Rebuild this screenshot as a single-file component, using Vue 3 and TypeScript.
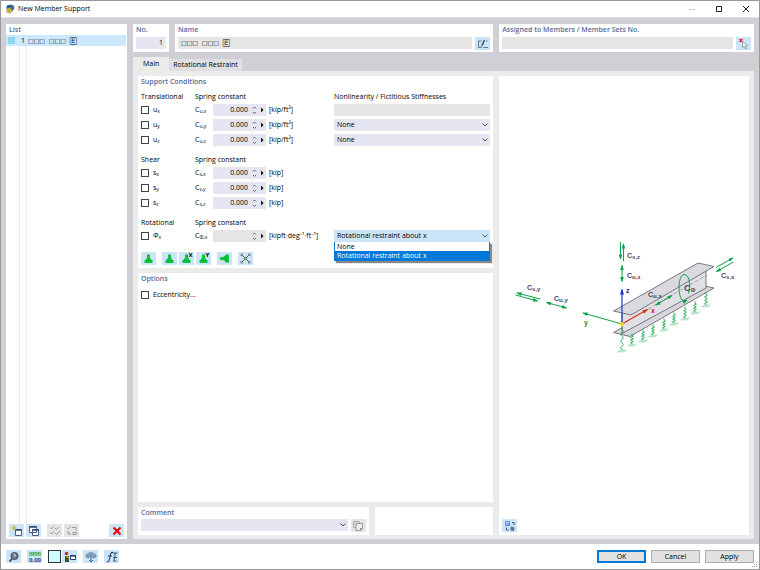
<script setup lang="ts">
import { ref } from 'vue'

interface Row {
  id: string
  symbol: string
  axis: string
  coefSub: string
  value: string
  unit: string
  disabled?: boolean
}
interface Group {
  title: string
  rows: Row[]
}

const groups: Group[] = [
  {
    title: 'Translational',
    rows: ['x', 'y', 'z'].map((a) => ({ id: 'u' + a, symbol: 'u', axis: a, coefSub: 'u,' + a, value: '0.000', unit: '[kip/ft²]' })),
  },
  {
    title: 'Shear',
    rows: ['x', 'y', 'z'].map((a) => ({ id: 's' + a, symbol: 's', axis: a, coefSub: 's,' + a, value: '0.000', unit: '[kip]' })),
  },
  {
    title: 'Rotational',
    rows: [{ id: 'phi', symbol: 'Φ', axis: 'x', coefSub: 'Φ,x', value: '', unit: '[kipft·deg⁻¹·ft⁻¹]', disabled: true }],
  },
]

const supportName = ref('□□□\u00a0\u00a0□□□\u00a0\u00a0🄴')
const memberNo = ref('1')
const restraint = ref('about-x')
const springs = [
  [622, 325, 348], [632, 331, 342], [643, 327, 338], [653, 322, 333], [664, 316, 327],
  [674, 310, 321], [685, 304, 316], [695, 299, 310], [706, 290, 303],
]
function springPath(x: number, top: number, bottom: number): string {
  const step = (bottom - top - 3) / 6
  let d = `M${x} ${top}v2`
  for (let i = 0; i < 6; i++) d += `L${x + (i % 2 ? -1.4 : 1.4)} ${top + 2 + step * (i + 0.5)}`
  return d + `L${x} ${bottom - 1}V${bottom}`
}
const presets = [
  { label: 'Hinged support', axis: '', gap: false },
  { label: 'Fixed support', axis: '', gap: true },
  { label: 'Support in X', axis: 'X', gap: false },
  { label: 'Support in Y', axis: 'Y', gap: false },
]
</script>

<template>
  <div class="window">
    <header class="titlebar">
      <svg class="app-icon" viewBox="0 0 10 10" aria-hidden="true">
        <path d="M1 4.500L2 1.500 5 .5l3.500 .8L9.500 4 7.500 7.500 4 5z" fill="#3c6fa5" />
        <path d="M2 2l3 1 1.500-1.500" stroke="#173f66" stroke-width=".8" fill="none" />
        <circle cx="4.200" cy="6.600" r="2.500" fill="#e8c63a" stroke="#a07a13" stroke-width=".6" />
        <circle cx="4.200" cy="6.600" r=".8" fill="#8a6a14" />
      </svg>
      <h1>New Member Support</h1>
      <div class="window-controls">
        <button type="button" aria-label="Minimize" disabled><svg viewBox="0 0 8 8"><path d="M1 4.500h6" stroke="#ccc" /></svg></button>
        <button type="button" aria-label="Maximize"><svg viewBox="0 0 8 8"><path d="M1.500 1.500h5v5h-5z" fill="none" stroke="#222" /></svg></button>
        <button type="button" aria-label="Close"><svg viewBox="0 0 8 8"><path d="M1 1l6 6M7 1L1 7" stroke="#222" /></svg></button>
      </div>
    </header>

    <main class="body">
      <section class="card list">
        <h2>List</h2>
        <div class="list-rows">
          <button type="button" class="list-row">
            <span class="swatch"></span><span class="num">1</span><span class="boxes">{{ supportName }}</span>
          </button>
          <div class="list-grid"></div>
        </div>
        <div class="list-tools">
          <button type="button" class="tool" aria-label="New">
            <svg viewBox="0 0 12 12"><path d="M4.500 4.500h6v6h-6z" fill="#fff" stroke="#4a5f80" /><path d="M4.500 5h6" stroke="#26456e" stroke-width="1.500" /><path d="M3 .5v5M.5 3h5M1.300 1.300l3.400 3.400M4.700 1.300L1.300 4.700" stroke="#c3b01a" stroke-width=".8" /></svg>
          </button>
          <button type="button" class="tool" aria-label="Copy">
            <svg viewBox="0 0 12 12"><path d="M1.500 1.500h7v6h-7zM4.500 4.500h6v6h-6z" fill="#fff" stroke="#4a5f80" /><path d="M1.500 2h7M4.500 5h6" stroke="#26456e" stroke-width="1.500" /></svg>
          </button>
          <button type="button" class="tool off push" aria-label="Select all" disabled>
            <svg viewBox="0 0 12 12" fill="none" stroke="#999"><path d="M1 2.500l1.500 1.500L5 1M1 7.500L2.500 9 5 6M6 3l1.500 1.500L10 2M6 8l1.500 1.500L11 6" /></svg>
          </button>
          <button type="button" class="tool off" aria-label="Invert selection" disabled>
            <svg viewBox="0 0 12 12" fill="none" stroke="#999"><path d="M1 2.500l1.500 1.500L5 1M6 2.500h4v3M2 6v3h3M7 7.500h3.500v2H7z" /></svg>
          </button>
          <button type="button" class="tool end" aria-label="Delete">
            <svg viewBox="0 0 12 12"><path d="M2.500 2.500l7 7M9.500 2.500l-7 7" stroke="#f00000" stroke-width="2" /></svg>
          </button>
        </div>
      </section>

      <div class="editor">
        <div class="top">
          <section class="card no">
            <h2><label for="no">No.</label></h2>
            <input id="no" v-model="memberNo" class="field right" />
          </section>
          <section class="card name">
            <h2><label for="name">Name</label></h2>
            <div class="line">
              <input id="name" v-model="supportName" class="field gray boxes" readonly />
              <button type="button" class="tool" aria-label="Edit name">
                <svg viewBox="0 0 12 12" fill="none" stroke="#4b6070"><path d="M4.500 3H1.500v6.500H4M6.500 9.500H11M9 3h1.500" stroke-width=".8" /><path d="M5 7.500L7.500 2" stroke-width="1.800" /><path d="M4.500 9.500L5 7.500" stroke-width="1" /></svg>
              </button>
            </div>
          </section>
          <section class="card assigned">
            <h2><label for="assigned">Assigned to Members / Member Sets No.</label></h2>
            <div class="line">
              <input id="assigned" class="field gray" readonly />
              <button type="button" class="tool" aria-label="Select members">
                <svg viewBox="0 0 12 12"><path d="M1.500 1l3 3M4.500 1l-3 3" stroke="#e02030" stroke-width="1.200" /><path d="M4.500 3.500v6l1.500-1.400L7.500 11l1.300-.6L7.500 7.700h2z" fill="#fff" stroke="#75818d" stroke-width=".7" /></svg>
              </button>
            </div>
          </section>
        </div>

        <nav class="tabs" role="tablist">
          <button type="button" role="tab" class="tab active" aria-selected="true">Main</button>
          <button type="button" role="tab" class="tab" aria-selected="false">Rotational Restraint</button>
        </nav>

        <div class="panel">
          <div class="left">
            <section class="card conditions">
              <h2>Support Conditions</h2>
              <div v-for="(g, gi) in groups" :key="g.title" class="group">
                <div class="grid heads">
                  <h3>{{ g.title }}</h3>
                  <h3>Spring constant</h3>
                  <h3 v-if="gi === 0" class="wide">Nonlinearity / Fictitious Stiffnesses</h3>
                </div>
                <div v-for="(r, ri) in g.rows" :key="r.id" class="grid">
                  <label class="check"><input type="checkbox" /><span>{{ r.symbol }}<sub>{{ r.axis }}</sub></span></label>
                  <label :for="'c-' + r.id" class="coef">C<sub>{{ r.coefSub }}</sub></label>
                  <div class="spin" :class="{ gray: r.disabled }">
                    <input :id="'c-' + r.id" :value="r.value" :disabled="r.disabled" />
                    <svg viewBox="0 0 16 12" aria-hidden="true">
                      <path d="M3 4.500L4.500 3 6 4.500M3 8L4.500 9.500 6 8" fill="none" stroke="#555" stroke-width=".9" />
                      <path d="M11 3.500v5L13.500 6z" fill="#111" />
                    </svg>
                  </div>
                  <span class="unit">{{ r.unit }}</span>
                  <input v-if="gi === 0 && ri === 0" class="field gray" aria-label="Nonlinearity x" disabled />
                  <div v-else-if="gi === 0" class="select">
                    <select :aria-label="'Nonlinearity ' + r.axis"><option>None</option></select>
                    <svg viewBox="0 0 8 8" aria-hidden="true"><path d="M1.500 2.500L4 5l2.500-2.500" /></svg>
                  </div>
                  <div v-else-if="gi === 2" class="select open">
                    <select v-model="restraint" aria-label="Rotational nonlinearity">
                      <option value="none">None</option>
                      <option value="about-x">Rotational restraint about x</option>
                    </select>
                    <svg viewBox="0 0 8 8" aria-hidden="true"><path d="M1.500 2.500L4 5l2.500-2.500" /></svg>
                    <ul class="menu" role="listbox">
                      <li role="option" @click="restraint = 'none'">None</li>
                      <li role="option" class="chosen" aria-selected="true" @click="restraint = 'about-x'">Rotational restraint about x</li>
                    </ul>
                  </div>
                </div>
              </div>
              <div class="presets">
                <button v-for="p in presets" :key="p.label" type="button" class="tool" :class="{ push: p.gap }" :aria-label="p.label">
                  <svg viewBox="0 0 15 13">
                    <path d="M6 2.500h3v3l1.500 2.500h1v3h-8V8h1L6 5.500z" fill="#08c440" />
                    <path d="M4 8.500h7" stroke="#0aa038" stroke-width=".6" />
                    <text v-if="p.axis" x="9.500" y="5" font-size="6" font-weight="700">{{ p.axis }}</text>
                  </svg>
                </button>
                <button type="button" class="tool push" aria-label="Lateral support">
                  <svg viewBox="0 0 15 13"><path d="M3 5h3l2.500-1.500V2.500H12v8H8.500v-1L6 8H3z" fill="#08c440" /><path d="M9 3v7" stroke="#0aa038" stroke-width=".6" /></svg>
                </button>
                <button type="button" class="tool push" aria-label="Free">
                  <svg viewBox="0 0 15 13" fill="none" stroke="#555"><path d="M4 3l7 7M11 3l-7 7" /><path d="M3 4V2h2M10 2h2v2M3 9v2h2M10 11h2V9" stroke-width=".7" /><circle cx="7.500" cy="6.500" r="1.200" fill="#58a050" stroke="none" /></svg>
                </button>
              </div>
            </section>
            <section class="card options">
              <h2>Options</h2>
              <label class="check"><input type="checkbox" /><span>Eccentricity...</span></label>
            </section>
            <div class="bottom">
              <section class="card comment">
                <h2><label for="comment">Comment</label></h2>
                <div class="line">
                  <div class="select">
                    <select id="comment"></select>
                    <svg viewBox="0 0 8 8" aria-hidden="true"><path d="M1.500 2.500L4 5l2.500-2.500" /></svg>
                  </div>
                  <button type="button" class="tool off" aria-label="Comment library" disabled>
                    <svg viewBox="0 0 12 12"><path d="M1.500 1.500h6v6h-6z" fill="#ddd" stroke="#aaa" /><path d="M4 3.500h6.500v5L8.500 10.500H4z" fill="#eee" stroke="#999" /><path d="M8 11V8h3z" fill="#999" /></svg>
                  </button>
                </div>
              </section>
              <section class="card spare"></section>
            </div>
          </div>

          <section class="card preview">
            <svg class="diagram" viewBox="504 235 240 120" role="img" aria-label="Member support diagram">
              <defs>
                <marker id="g" viewBox="0 0 6 4" refX="5" refY="2" markerWidth="5.500" markerHeight="4" markerUnits="userSpaceOnUse" orient="auto-start-reverse"><path d="M0 0l6 2-6 2z" fill="#0aa348" /></marker>
                <marker id="b" viewBox="0 0 6 4" refX="5" refY="2" markerWidth="6" markerHeight="4.500" markerUnits="userSpaceOnUse" orient="auto"><path d="M0 0l6 2-6 2z" fill="#1437d0" /></marker>
                <marker id="r" viewBox="0 0 6 4" refX="5" refY="2" markerWidth="6" markerHeight="4.500" markerUnits="userSpaceOnUse" orient="auto"><path d="M0 0l6 2-6 2z" fill="#d63a10" /></marker>
              </defs>
              <g stroke="#5b5b66" stroke-width=".8" stroke-linejoin="round">
                <path d="M613.500 330L698 282l16 3.500L630 334z" fill="#d6d6dc" />
                <path d="M622 310L706 266v19.500L622 331z" fill="#e0e0e5" />
                <path d="M613.500 308.500L698 260.500l16 3.500-83 48.500z" fill="#d9d9df" />
              </g>
              <path d="M622 321.500L706 273" stroke="#777" stroke-width=".6" stroke-dasharray="4 2" />
              <g fill="none" stroke="#18a850" stroke-width=".9">
                <path v-for="s in springs" :key="s[0]" :d="springPath(s[0], s[1], s[2])" />
              </g>
              <g fill="#c4ead0" stroke="#7fcb98" stroke-width=".4">
                <path v-for="s in springs" :key="s[0]" :d="`M${s[0] - 4.5} ${s[2] + 1.5}l3-2h6l-2.5 2z`" />
              </g>
              <g fill="none" stroke="#0aa348" stroke-width="1">
                <path d="M620.500 239.500v17" marker-end="url(#g)" />
                <path d="M623.500 258.500v-17" marker-end="url(#g)" />
                <path d="M622 263v16" marker-start="url(#g)" marker-end="url(#g)" />
                <path d="M540.500 296.500l-23.500-6" marker-end="url(#g)" />
                <path d="M515.500 292.500l22 6" marker-end="url(#g)" />
                <path d="M546.500 300l20 5.500" marker-start="url(#g)" marker-end="url(#g)" />
                <path d="M622 321.500l-39-11" marker-end="url(#g)" />
                <path d="M656 302.500l16-9.500" marker-start="url(#g)" marker-end="url(#g)" />
                <path d="M716 265l17-9.500" marker-end="url(#g)" />
                <path d="M733.500 259.500l-17 9.500" marker-end="url(#g)" />
                <path d="M689 277c-1-3-3-5-5-5-3 0-5 6-5 13.500s2.500 13 5 13q1.500 0 3-1" marker-end="url(#g)" />
                <path d="M689 277q1.500 7-.5 14" />
              </g>
              <path d="M622 321V287" stroke="#1437d0" stroke-width="1.200" marker-end="url(#b)" />
              <path d="M622 321.500l25.500-14.500" stroke="#d63a10" stroke-width="1.200" marker-end="url(#r)" />
              <circle cx="622" cy="321.500" r="2" fill="#ffd21a" />
              <g class="labels">
                <text x="627" y="255">C<tspan class="s" dy="1.500">s,z</tspan></text>
                <text x="627" y="275">C<tspan class="s" dy="1.500">u,z</tspan></text>
                <text x="527" y="287">C<tspan class="s" dy="1.500">s,y</tspan></text>
                <text x="554" y="298">C<tspan class="s" dy="1.500">u,y</tspan></text>
                <text x="648" y="294">C<tspan class="s" dy="1.500">u,x</tspan></text>
                <text x="721" y="275">C<tspan class="s" dy="1.500">s,x</tspan></text>
                <text x="684" y="288" class="big">C<tspan class="s" dy="1.500">Φ</tspan></text>
                <text x="626" y="290" fill="#1c1c8c">z</text>
                <text x="651" y="310" fill="#e02020">x</text>
                <text x="584" y="322" fill="#0a9040">y</text>
              </g>
            </svg>
            <div>
              <button type="button" class="tool" aria-label="Switch view">
                <svg viewBox="0 0 12 12"><path d="M1 1h5v5H1z" fill="#5b8fe8" /><path d="M2 2.500h3M2 4h2" stroke="#fff" stroke-width=".7" /><path d="M2.500 7.500V10h2M8 2.500h2V5" fill="none" stroke="#445" stroke-width=".9" /><path d="M6.500 6.500l4 1-.5 3.500-3.500-.5z" fill="#5a6e98" /></svg>
              </button>
            </div>
          </section>
        </div>
      </div>
    </main>

    <footer class="footer">
      <button type="button" class="tool" aria-label="Help">
        <svg viewBox="0 0 12 12"><circle cx="6.500" cy="5" r="3.600" fill="#667784" stroke="#43525e" /><path d="M4 8L1.500 10.500" stroke="#43525e" stroke-width="1.800" /><path d="M5.300 4q1.200-1.400 2.400 0L6.500 5.500v.8" stroke="#fff" stroke-width=".8" fill="none" /></svg>
      </button>
      <button type="button" class="tool" aria-label="Units">
        <svg viewBox="0 0 12 12"><path d="M0 1h12v4H0z" fill="#7cc68a" /><path d="M2 1v2M4.500 1v2M7 1v2M9.500 1v2" stroke="#4a9a5a" stroke-width=".7" /><text x="0" y="11" font-size="6" font-weight="700" fill="#24507c">0,00</text></svg>
      </button>
      <button type="button" class="color" aria-label="Color"></button>
      <button type="button" class="tool joined" aria-label="Display">
        <svg viewBox="0 0 12 12"><circle cx="2.500" cy="2.500" r="1.800" fill="#b33" /><path d="M1 5h4v6H1z" fill="#3a5a2a" /><path d="M2 5l3 2" stroke="#dc3" /><path d="M6.500 4.500h5v4h-5z" fill="#fff" stroke="#26456e" /><path d="M6 5h6" stroke="#26456e" stroke-width="1.400" /></svg>
      </button>
      <button type="button" class="tool" aria-label="View">
        <svg viewBox="0 0 12 12"><path d="M1 4q5-5 10 0v2L8 7V5H4v2L1 6z" fill="#7fa3c2" stroke="#4a7296" stroke-width=".6" /><path d="M6 5v6M4 9l2 2 2-2" stroke="#3d6385" fill="none" /></svg>
      </button>
      <button type="button" class="tool" aria-label="Formula">
        <svg viewBox="0 0 12 12"><path d="M1 11q2 0 2.500-3L4.500 3.500Q5 1 7 1.500M2 5h4" fill="none" stroke="#26456e" stroke-width="1.100" /><path d="M6.500 2h5M9 2v4M7 6.500h4M9 6.500L7.500 10h3" stroke="#26456e" stroke-width=".9" fill="none" /></svg>
      </button>
      <div class="actions">
        <button type="button" class="btn primary">OK</button>
        <button type="button" class="btn">Cancel</button>
        <button type="button" class="btn">Apply</button>
      </div>
      <svg class="grip" viewBox="0 0 6 6" aria-hidden="true"><path d="M4 0h1v1H4zM2 2h1v1H2zM4 2h1v1H4zM0 4h1v1H0zM2 4h1v1H2zM4 4h1v1H4z" fill="#aaa" /></svg>
    </footer>
  </div>
</template>

<style>
body {
  background: #fff;
}
</style>

<style scoped>
* {
  box-sizing: border-box;
}
.window {
  position: relative;
  display: flex;
  flex-direction: column;
  min-height: 100vh;
  border: 1px solid #999;
  background: #fff;
  color: #000;
  font: 7px/12px "Open Sans", "Noto Sans", "DejaVu Sans", sans-serif;
}
button,
input,
select {
  margin: 0;
  padding: 0;
  border: 0;
  border-radius: 0;
  color: inherit;
  font: inherit;
}
h1,
h2,
h3,
ul {
  margin: 0;
  padding: 0;
  font-size: inherit;
  font-weight: 400;
  list-style: none;
}
svg {
  display: block;
}
.titlebar {
  display: flex;
  align-items: center;
  height: 16px;
  padding: 0 9px 0 4px;
}
.app-icon {
  width: 10px;
  height: 10px;
}
h1 {
  margin-left: 3px;
}
.window-controls {
  display: flex;
  gap: 19px;
  margin-left: auto;
}
.window-controls button {
  width: 8px;
  height: 8px;
  background: none;
}
.body {
  display: flex;
  flex: 1;
  gap: 6px;
  padding: 6px 5px 5px;
  border-top: 1px solid #dededf;
  background: #d0cfd5;
}
.card {
  display: flex;
  flex-direction: column;
  padding: 0 3px 3px;
  background: #fff;
}
h2 {
  color: #566a98;
  font-weight: 600;
}
.list {
  flex: 0 0 121px;
  padding: 0 0 2px;
}
.list h2 {
  padding-left: 3px;
  line-height: 11px;
}
.list-rows {
  display: flex;
  flex: 1;
  flex-direction: column;
}
.list-row {
  display: flex;
  align-items: center;
  height: 11px;
  margin-right: 1px;
  background: #cce8ff;
  text-align: left;
}
.swatch {
  width: 7px;
  height: 7px;
  margin-left: 2px;
  background: #8bd6f2;
}
.num {
  width: 10px;
  text-align: right;
}
.boxes {
  font-family: "DejaVu Sans", sans-serif;
  font-size: 6px;
}
.list-row .boxes {
  margin-left: 3px;
}
.list-grid {
  flex: 1;
  width: 8px;
  margin-left: 13px;
  border: 1px solid #ececec;
  border-width: 0 1px;
}
.list-tools {
  display: flex;
  gap: 2px;
  padding: 0 3px;
}
.tool {
  display: grid;
  flex: none;
  place-items: center;
  width: 15px;
  height: 13px;
  background: #cce4f7;
}
.tool svg {
  width: 12px;
  height: 12px;
}
.tool.off {
  background: #e5e5e5;
}
.tool.push {
  margin-left: 4px;
}
.tool.end {
  margin-left: auto;
}
.editor {
  display: flex;
  flex: 1;
  flex-direction: column;
  min-width: 0;
}
.top {
  display: flex;
  gap: 6px;
}
.top .card {
  gap: 1px;
  padding-bottom: 2px;
}
.no {
  flex: 0 0 36px;
}
.name {
  flex: 320;
}
.assigned {
  flex: 255;
}
.line {
  display: flex;
  gap: 3px;
}
.field {
  width: 100%;
  min-width: 0;
  height: 12px;
  padding: 0 3px;
  background: #e6e6f2;
}
.right {
  padding-right: 3px;
  text-align: right;
}
.gray {
  background: #e5e5e5;
}
.tabs {
  display: flex;
  align-items: flex-end;
  margin-top: 5px;
}
.tab {
  height: 12px;
  padding: 0 4px;
  background: #dfdfe2;
}
.tab.active {
  height: 14px;
  padding: 0 10px;
  background: #ebebeb;
}
.panel {
  display: flex;
  flex: 1;
  gap: 6px;
  padding: 5px 5px 4px;
  background: #ebebeb;
}
.left {
  display: flex;
  flex: 355;
  flex-direction: column;
  gap: 5px;
  min-width: 0;
}
.preview {
  flex: 244;
  min-width: 0;
}
.diagram {
  flex: 1;
  width: 240px;
  max-width: 100%;
  margin: 0 auto;
}
.labels {
  fill: #4a4a5c;
  font: 700 7px "Liberation Sans", Arial, sans-serif;
}
.labels .big {
  font-size: 9px;
}
.labels .s {
  font-size: 6px;
}
.group {
  display: grid;
  row-gap: 3px;
  margin-top: 8px;
}
.conditions h2 + .group {
  margin-top: 3px;
}
.grid {
  display: grid;
  grid-template-columns: 54px 18px 53px 68px 1fr;
  align-items: center;
  height: 12px;
}
.heads {
  margin-bottom: -2px;
  white-space: nowrap;
}
.heads .wide {
  grid-column: 5;
}
.check {
  display: flex;
  gap: 4px;
  align-items: center;
}
.check input {
  width: 8px;
  height: 8px;
  border: 1px solid #444;
  background: #fff;
  appearance: none;
}
.check input:checked {
  background: #0078d7;
}
sub {
  font-size: 5px;
  line-height: 1px;
  vertical-align: -1px;
}
.spin {
  display: flex;
  height: 12px;
  background: #e6e6f2;
}
.spin.gray {
  background: #e5e5e5;
}
.spin input {
  flex: 1;
  min-width: 0;
  background: none;
  text-align: right;
}
.spin svg {
  width: 16px;
  height: 12px;
  margin-left: 2px;
}
.unit {
  padding-left: 3px;
  white-space: nowrap;
}
.select {
  position: relative;
  display: flex;
  flex: 1;
  align-items: center;
  height: 12px;
  background: #e6e6f2;
}
.select select {
  width: 100%;
  height: 12px;
  padding: 0 3px;
  background: none;
  appearance: none;
}
.select > svg {
  position: absolute;
  right: 1px;
  width: 8px;
  height: 8px;
  fill: none;
  stroke: #555;
  pointer-events: none;
}
.select.open {
  background: #cce4f7;
}
.menu {
  position: absolute;
  top: 100%;
  right: 0;
  left: 0;
  z-index: 1;
  border: 1px solid #0078d7;
  border-top: 0;
  background: #fff;
  box-shadow: 2px 2px 1px #888;
  line-height: 9px;
}
.menu li {
  height: 9px;
  padding: 0 2px;
}
.menu .chosen {
  background: #0078d7;
  color: #fff;
}
.presets {
  display: flex;
  gap: 2px;
  margin-top: 10px;
}
.presets .tool svg {
  width: 15px;
  height: 13px;
}
.options {
  flex: 1;
}
.options .check {
  margin-top: 4px;
}
.bottom {
  display: flex;
  gap: 6px;
}
.comment {
  flex: 233;
}
.spare {
  flex: 116;
}
.footer {
  display: flex;
  gap: 6px;
  align-items: center;
  height: 25px;
  padding: 0 5px;
}
.color {
  width: 13px;
  height: 13px;
  border: 1px solid #333;
  background: #ccffff;
}
.tool.joined {
  margin-left: -5px;
}
.actions {
  display: flex;
  gap: 5px;
  margin-left: auto;
}
.btn {
  width: 49px;
  height: 13px;
  border: 1px solid #adadad;
  background: #e1e1e1;
  line-height: 11px;
}
.btn.primary {
  border: 2px solid #0078d7;
  line-height: 9px;
}
.grip {
  position: absolute;
  right: 1px;
  bottom: 1px;
  width: 6px;
  height: 6px;
}
</style>
